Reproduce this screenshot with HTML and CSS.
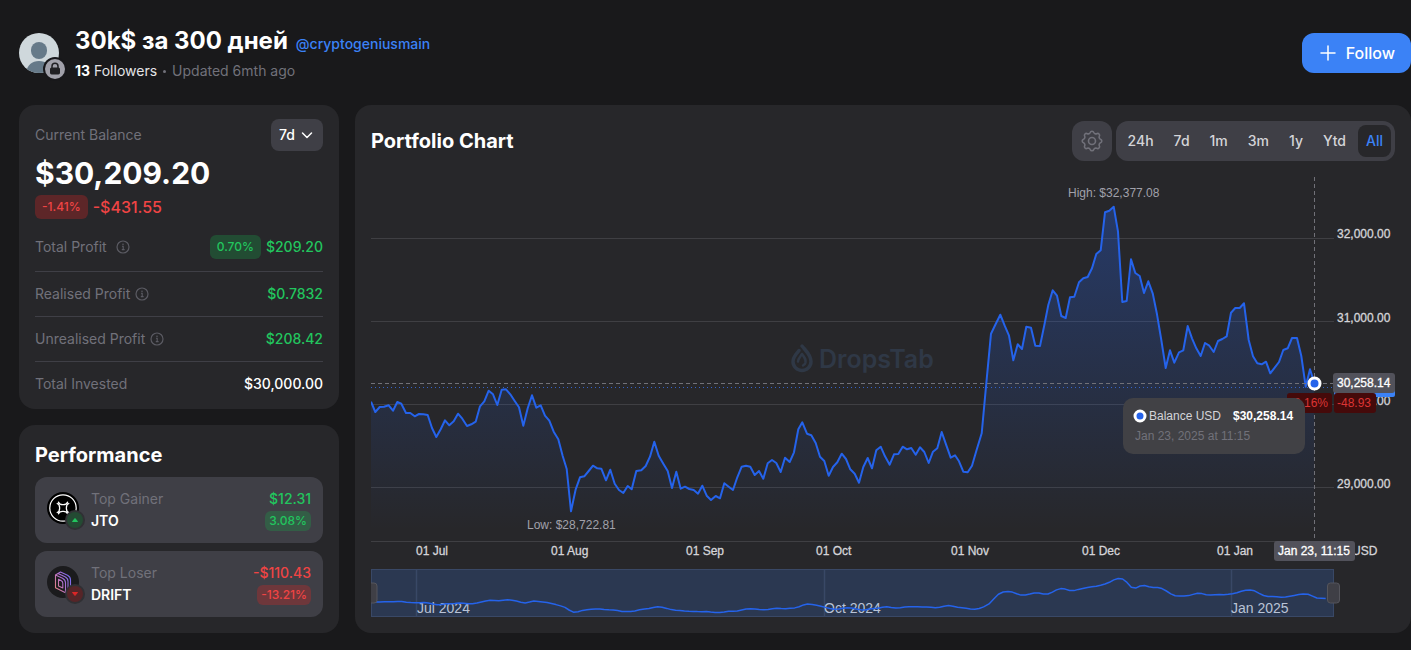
FILE: index.html
```html
<!DOCTYPE html>
<html lang="en">
<head>
<meta charset="utf-8">
<meta name="viewport" content="width=device-width, initial-scale=1">
<title>30k$ за 300 дней</title>
<link rel="stylesheet" href="styles.css">
</head>
<body>
<svg class="defs" aria-hidden="true">
  <symbol id="info" viewBox="0 0 16 16">
    <circle cx="8" cy="8" r="6" fill="none" stroke="currentColor" stroke-width="1.2"/>
    <path d="M7 7.3h1.2v3.2M6.8 10.6h2.8" fill="none" stroke="currentColor" stroke-width="1.1"/>
    <circle cx="8" cy="5.3" r=".8" fill="currentColor"/>
  </symbol>
</svg>
<div class="page">
  <header class="header">
    <div class="avatar">
      <svg class="avatar-image" viewBox="0 0 40 40" aria-hidden="true">
        <clipPath id="round"><circle cx="20" cy="20" r="20"/></clipPath>
        <g clip-path="url(#round)">
          <rect width="40" height="40" fill="#cfd8dc"/>
          <rect x="12" y="9" width="16" height="17" rx="8" fill="#667a89"/>
          <path d="M7 40c1-8 6-12 13-12s12 4 13 12z" fill="#667a89"/>
        </g>
      </svg>
      <svg class="avatar-lock" viewBox="0 0 24 24" aria-hidden="true">
        <circle cx="12" cy="12" r="12" fill="#18181b"/>
        <circle cx="12" cy="12" r="10" fill="#a1a1aa"/>
        <rect x="7" y="10.4" width="10" height="7" rx="1.6" fill="#202023"/>
        <path d="M9 11V9.2a3 3 0 0 1 6 0V11" fill="none" stroke="#202023" stroke-width="1.5"/>
      </svg>
    </div>
    <div class="identity">
      <div class="identity-line">
        <h1>30k$ за 300 дней</h1>
        <a class="handle" href="#">@cryptogeniusmain</a>
      </div>
      <p class="meta"><span class="followers"><b>13</b> Followers</span><span class="dot"></span>Updated 6mth ago</p>
    </div>
    <button class="follow" type="button">
      <svg viewBox="0 0 20 20" aria-hidden="true"><path d="M10 3v14M3 10h14" stroke="currentColor" stroke-width="1.5" stroke-linecap="round"/></svg>
      Follow
    </button>
  </header>

  <main class="columns">
    <div class="side">
      <section class="card balance">
        <div class="row top">
          <label for="period">Current Balance</label>
          <div class="select">
            <select id="period"><option>7d</option></select>
            <svg viewBox="0 0 12 12" aria-hidden="true"><path d="M1.500 4l4.500 4.500 4.500-4.500" fill="none" stroke="currentColor" stroke-width="1.5" stroke-linecap="round" stroke-linejoin="round"/></svg>
          </div>
        </div>
        <p class="amount">$30,209.20</p>
        <p class="change"><span class="badge red">-1.41%</span><span>-$431.55</span></p>
        <div class="row line profit">
          <span class="name wide">Total Profit <svg><use href="#info"/></svg></span>
          <span class="value up"><span class="badge green">0.70%</span>$209.20</span>
        </div>
        <div class="row line">
          <span class="name">Realised Profit <svg><use href="#info"/></svg></span>
          <span class="value up">$0.7832</span>
        </div>
        <div class="row line">
          <span class="name">Unrealised Profit <svg><use href="#info"/></svg></span>
          <span class="value up">$208.42</span>
        </div>
        <div class="row line">
          <span class="name">Total Invested</span>
          <span class="value">$30,000.00</span>
        </div>
      </section>

      <section class="card performance">
        <h2>Performance</h2>
        <div class="coin">
          <svg class="coin-icon" viewBox="0 0 40 40" aria-hidden="true">
            <circle cx="16" cy="16" r="16" fill="#000"/>
            <circle cx="16" cy="16" r="13.2" fill="none" stroke="#fff" stroke-width="1.2"/>
            <path d="M11.500 10.200c1 2.600 2.400 2.400 4.500 2.400s3.500.2 4.500-2.400M11.500 21.800c1-2.600 2.400-2.400 4.500-2.400s3.500-.2 4.500 2.400M10.200 11.500c2.600 1 2.400 2.400 2.400 4.500s.2 3.500-2.400 4.500M21.800 11.500c-2.600 1-2.400 2.400-2.400 4.500s-.2 3.500 2.400 4.500" fill="none" stroke="#fff" stroke-width="1.300" stroke-linecap="round"/>
            <circle cx="28" cy="28" r="10" fill="#303034"/>
            <circle cx="28" cy="28" r="8" fill="#244a33"/>
            <path d="M25.500 29.500l2.500-3 2.500 3z" fill="#22c55e" stroke="#22c55e" stroke-linejoin="round"/>
          </svg>
          <div class="coin-text"><span class="muted">Top Gainer</span><b>JTO</b></div>
          <div class="coin-value up"><span>$12.31</span><span class="badge small green">3.08%</span></div>
        </div>
        <div class="coin">
          <svg class="coin-icon" viewBox="0 0 40 40" aria-hidden="true">
            <linearGradient id="drift" gradientUnits="userSpaceOnUse" x1="8" y1="20" x2="25" y2="12"><stop offset="0" stop-color="#e0808a"/><stop offset=".45" stop-color="#b070d0"/><stop offset="1" stop-color="#6f6af2"/></linearGradient>
            <circle cx="16" cy="16" r="16" fill="#1b1b1d"/>
            <g fill="none" stroke="url(#drift)" stroke-width="1.100" stroke-linejoin="round">
              <path d="M8.500 9l7 3.200q3 1.400 3 4.500v10l-10-5z"/>
              <path d="M8.500 9l2.500-1.500 7 3.200q3 1.400 3 4.500v9.500l-2.500 1.500"/>
              <path d="M11 7.500l2.500-1.500 7 3.200q3 1.400 3 4.500v9.500l-2.500 1.500"/>
              <path d="M11.500 13.200l2.500 1.200q1.800.9 1.800 2.800v4.800l-4.300-2.100z"/>
            </g>
            <circle cx="28" cy="28" r="10" fill="#303034"/>
            <circle cx="28" cy="28" r="8" fill="#562528"/>
            <path d="M25.500 26.500l2.500 3 2.500-3z" fill="#dc2626" stroke="#dc2626" stroke-linejoin="round"/>
          </svg>
          <div class="coin-text"><span class="muted">Top Loser</span><b>DRIFT</b></div>
          <div class="coin-value down"><span>-$110.43</span><span class="badge small red">-13.21%</span></div>
        </div>
      </section>
    </div>

    <section class="card chart">
      <div class="row chart-head">
        <h2>Portfolio Chart</h2>
        <div class="tools">
          <button class="gear" type="button" aria-label="Chart settings">
            <svg viewBox="0 0 24 24" aria-hidden="true">
              <path fill="none" stroke="currentColor" stroke-width="1.600" stroke-linejoin="round" d="M10.200 3.500A1.900 1.900 0 0 1 13.800 3.500A2.200 2.200 0 0 0 16.700 4.700A1.900 1.900 0 0 1 19.300 7.300A2.200 2.200 0 0 0 20.500 10.200A1.900 1.900 0 0 1 20.500 13.800A2.200 2.200 0 0 0 19.300 16.700A1.900 1.900 0 0 1 16.700 19.300A2.200 2.200 0 0 0 13.800 20.500A1.900 1.900 0 0 1 10.200 20.500A2.200 2.200 0 0 0 7.300 19.300A1.900 1.900 0 0 1 4.700 16.700A2.200 2.200 0 0 0 3.500 13.800A1.900 1.900 0 0 1 3.500 10.200A2.200 2.200 0 0 0 4.700 7.300A1.900 1.900 0 0 1 7.300 4.700A2.200 2.200 0 0 0 10.200 3.500z"/>
              <circle cx="12" cy="12" r="3.500" fill="none" stroke="currentColor" stroke-width="1.600"/>
            </svg>
          </button>
          <div class="ranges">
            <button type="button">24h</button><button type="button">7d</button><button type="button">1m</button><button type="button">3m</button><button type="button">1y</button><button type="button">Ytd</button><button type="button" class="active">All</button>
          </div>
        </div>
      </div>
      <svg class="plot" viewBox="371 177 1024 440" role="img" aria-label="Portfolio Chart">
        <defs>
          <linearGradient id="fill" gradientUnits="userSpaceOnUse" x1="0" y1="207" x2="0" y2="530">
            <stop offset="0" stop-color="#2563eb" stop-opacity=".32"/><stop offset="1" stop-color="#2563eb" stop-opacity="0"/>
          </linearGradient>
          <clipPath id="nav-clip"><rect x="371" y="569" width="962" height="48"/></clipPath>
        </defs>
        <g class="watermark">
          <path d="M802 346c4 5 9 9 9 15.500a9 9 0 0 1-18 0c0-5 4-8 6-11" fill="none" stroke-width="3.500" stroke-linecap="round"/>
          <path d="M802 354c-2 3-4 5-4 7.500M802 354c3 4 4 5.500 3.500 8.500-.4 2-1.500 2.500-2.500 3" fill="none" stroke-width="2.500" stroke-linecap="round"/>
          <text x="819" y="368">DropsTab</text>
        </g>
        <path class="grid" d="M371 238.500H1334M371 321.500H1334M371 404.500H1334M371 487.500H1334M371 541.500H1334"/>
        <path id="area" fill="url(#fill)"/>
        <path id="line" class="series"/>
        <path class="last" d="M371 387.500H1334"/>
        <path class="cross" d="M371 383.500H1334M1314.500 177V540"/>
        <text class="extreme" x="1068" y="197">High: $32,377.08</text>
        <text class="extreme" x="527" y="529">Low: $28,722.81</text>
        <g class="axis">
          <text x="1337" y="238">32,000.00</text><text x="1337" y="322">31,000.00</text>
          <text x="1337" y="405">30,000.00</text><text x="1337" y="488">29,000.00</text>
          <text x="416" y="555">01 Jul</text><text x="551" y="555">01 Aug</text><text x="686" y="555">01 Sep</text>
          <text x="816" y="555">01 Oct</text><text x="951" y="555">01 Nov</text><text x="1082" y="555">01 Dec</text>
          <text x="1217" y="555">01 Jan</text><text x="1352" y="555">USD</text>
        </g>
        <rect x="1334" y="377" width="61" height="20" rx="2" fill="#3b82f6"/>
        <rect x="1333" y="373" width="62" height="20" rx="3" fill="#52525b"/>
        <text class="tag" x="1337" y="387">30,258.14</text>
        <rect x="1287" y="393" width="45" height="20" rx="3" fill="#450a0a"/>
        <rect x="1334" y="393" width="42" height="20" rx="3" fill="#450a0a"/>
        <text class="loss" x="1290" y="407">-0.16%</text><text class="loss" x="1337" y="407">-48.93</text>
        <rect x="1274" y="541" width="81" height="20" rx="3" fill="#52525b"/>
        <text class="tag" x="1278" y="555">Jan 23, 11:15</text>

        <rect class="tip" x="1123" y="398" width="182" height="56" rx="10"/>
        <circle class="marker" cx="1140" cy="416" r="5"/>
        <text class="tip-name" x="1149" y="420">Balance USD</text>
        <text class="tip-value" x="1233" y="420">$30,258.14</text>
        <text class="tip-date" x="1135" y="440">Jan 23, 2025 at 11:15</text>
        <circle class="marker" cx="1314.500" cy="383.500" r="5.500"/>

        <rect x="371.500" y="569.500" width="962" height="47" fill="#2b3851" stroke="#394866"/>
        <path d="M416.500 570V616M824.500 570V616M1231.500 570V616" stroke="#394866" stroke-width="1.500"/>
        <g class="nav-text"><text x="417" y="613">Jul 2024</text><text x="824" y="613">Oct 2024</text><text x="1231" y="613">Jan 2025</text></g>
        <path id="nav-line" class="series thin"/>
        <rect class="handle-bar" x="365" y="583" width="12" height="20" rx="3" clip-path="url(#nav-clip)"/>
        <rect class="handle-bar" x="1327.500" y="583" width="12" height="20" rx="3"/>
      </svg>
    </section>
  </main>
</div>
<script src="chart.js"></script>
</body>
</html>
```
FILE: styles.css
```css
* { box-sizing: border-box; }
body { margin: 0; background: #19191b; color: #fff; font: 400 14px/20px Inter, "Noto Sans", sans-serif; }
h1, h2, p { margin: 0; }
button, select { font: inherit; color: inherit; border: 0; cursor: pointer; }
.defs { display: none; }
.page { padding: 25px 0 17px 19px; }

.header { display: flex; align-items: center; height: 56px; }
.avatar { position: relative; width: 40px; height: 40px; margin-right: 16px; }
.avatar-image { display: block; width: 40px; height: 40px; }
.avatar-lock { position: absolute; left: 24px; top: 24px; width: 24px; height: 24px; }
.identity { flex: 1; }
.identity-line { display: flex; align-items: baseline; gap: 8px; }
h1 { font-size: 24px; line-height: 32px; font-weight: 700; }
.handle { color: #3b82f6; font-weight: 500; text-decoration: none; }
.meta { display: flex; align-items: center; margin-top: 4px; color: #71717a; }
.followers { color: #e4e4e7; }
.followers b { color: #fff; font-weight: 700; }
.dot { width: 3px; height: 3px; margin: 0 6px; border-radius: 50%; background: #71717a; }
.follow { display: flex; align-items: center; gap: 8px; height: 40px; padding: 0 16px; border-radius: 12px; background: #3b82f6; font-size: 16px; font-weight: 500; }
.follow svg { width: 20px; height: 20px; }

.columns { display: grid; grid-template-columns: 320px minmax(0, 1fr); gap: 16px; align-items: start; margin-top: 24px; }
.side { display: grid; gap: 16px; }
.card { border-radius: 16px; background: #27272a; padding: 16px; }
.row { display: flex; align-items: center; justify-content: space-between; }
h2 { font-size: 20px; line-height: 28px; font-weight: 700; }
.muted, .name, .top label { color: #71717a; }

.balance { padding: 14px 16px 3px; }
.select { position: relative; }
.select select { display: block; appearance: none; width: 52px; height: 32px; padding: 0 8px; border-radius: 8px; background: #3f3f46; font-weight: 500; }
.select svg { position: absolute; right: 10px; top: 10px; width: 12px; height: 12px; pointer-events: none; }
.amount { margin-top: 2px; font-size: 30px; line-height: 40px; font-weight: 700; }
.change { display: flex; align-items: center; gap: 5px; margin-top: 2px; color: #ef4444; font-size: 16px; line-height: 24px; font-weight: 500; }
.badge { padding: 0 7px; border-radius: 6px; font-size: 12px; line-height: 24px; font-weight: 500; }
.badge.small { padding: 0 4px; line-height: 20px; }
.red { background: rgba(220, 38, 38, .3); color: #ef4444; }
.green { background: rgba(22, 163, 74, .3); color: #22c55e; }
.line { padding: 12px 0; border-bottom: 1px solid #3f3f46; }
.line:last-child { border: 0; }
.profit { margin-top: 4px; }
.name { display: flex; align-items: center; gap: 4px; }
.name.wide { gap: 8px; }
.name svg { width: 16px; height: 16px; color: #5b5b63; }
.value { display: flex; align-items: center; gap: 5px; font-weight: 500; }
.up { color: #22c55e; }
.down { color: #ef4444; }

.performance { display: grid; gap: 8px; }
.coin { display: flex; align-items: center; height: 66px; padding: 12px; border-radius: 12px; background: #3f3f46; }
.coin-icon { width: 40px; height: 40px; margin: 4px 4px 0 0; }
.coin-text { display: grid; gap: 2px; flex: 1; }
.coin-text b { font-weight: 600; }
.coin-value { display: grid; gap: 2px; justify-items: end; font-weight: 500; }

.tools { display: flex; gap: 4px; }
.gear { display: grid; place-items: center; width: 40px; height: 40px; padding: 0; border-radius: 12px; background: #3f3f46; color: #71717a; }
.gear svg { width: 24px; height: 24px; }
.ranges { display: flex; gap: 4px; padding: 4px; border-radius: 12px; background: #3f3f46; }
.ranges button { height: 32px; padding: 0 8px; border-radius: 8px; background: none; color: #d4d4d8; font-weight: 500; }
.ranges .active { background: #27272a; color: #3b82f6; }

.plot { display: block; width: 100%; height: auto; margin-top: 16px; font: 12px "Liberation Sans", Arial, sans-serif; }
.watermark { fill: #2f3846; stroke: #2f3846; }
.watermark text { stroke: none; font: 600 25px Inter, sans-serif; }
.grid { fill: none; stroke: #3f3f43; }
.series { fill: none; stroke: #2563eb; stroke-width: 2; stroke-linejoin: round; }
.series.thin { stroke-width: 1.5; }
.cross { fill: none; stroke: #717178; stroke-dasharray: 4 3; }
.last { fill: none; stroke: #3563c4; stroke-dasharray: 1 3; }
.extreme { fill: #a1a1aa; }
.axis { fill: #d4d4d8; stroke: #d4d4d8; stroke-width: .3; }
.tag { fill: #fff; stroke: #fff; stroke-width: .3; }
.loss { fill: #dc3535; }
.tip { fill: #414145; }
.tip-name { fill: #d4d4d8; }
.tip-value { fill: #fff; font-weight: 700; }
.tip-date { fill: #71717a; }
.marker { fill: #2563eb; stroke: #fff; stroke-width: 3; }
.nav-text { fill: #b9c3d6; font-size: 14px; }
.handle-bar { fill: #3f3f46; stroke: #55555c; }
```
FILE: chart.js
```js
// Each run holds its origin and points measured in thirds of a chart unit.
const runs = [
  { x: 360, y: 370, p: "33,95 46,126 59,111 72,110 86,106 99,122 112,96 124,101 138,129 151,129 164,139 177,132 190,133 203,135 216,174 229,201 242,178 255,151 268,166 281,154 294,131 307,146 321,168 334,163 347,155 360,109 373,94 386,62 399,73 412,105 425,59 438,58 451,73 464,93 477,112 490,167 503,115 516,76 529,113 542,106 555,137 568,152 581,185 595,208 608,258 620,297 633,424 647,358 660,322 673,319 686,303 699,287 712,295" },
  { x: 600, y: 370, p: "4,296 18,331 31,299 44,341 57,360 70,369 83,348 95,358 109,303 124,301 137,288 150,260 163,215 176,257 190,281 203,303 216,354 229,305 242,356 255,350 268,357 281,360 294,371 307,347 320,377 333,390 347,378 360,385 373,340 386,350 399,360 412,322 425,290 438,287 451,290 464,315 477,303 490,326 503,280 516,270 529,279 542,306 555,263 569,276 582,247 595,178 607,157 621,191 634,196 647,219 660,260 673,273 686,317 699,291 712,277 725,251 738,267 751,298 764,311 777,338" },
  { x: 840, y: 180, p: "70,861 83,834 96,865 109,811 122,800 135,829 149,854 162,823 175,822 188,800 201,808 214,804 227,824 240,802 253,816 266,849 279,815 292,805 305,756 318,793 332,833 345,826 357,844 370,875 383,877 396,857 409,813 425,760 439,610 453,461 467,432 481,404 494,437 507,467 520,541 533,493 546,507 559,440 573,443 586,497 600,498 613,436 625,375 638,331 651,347 664,408 677,414 690,352 703,350 717,307 730,295 743,291 756,265 769,222 782,211 795,97 808,92 821,80 834,155 847,366 860,363" },
  { x: 1100, y: 200, p: "93,178 106,219 119,228 132,279 145,244 158,280 171,343 184,420 197,504 210,451 223,488 237,457 250,451 263,378 276,415 289,445 302,468 315,429 328,437 341,456 354,423 367,417 380,409 393,338 406,324 419,324 432,310 446,420 459,469 472,490 485,493 498,485 511,520 524,503 537,486 550,450 563,445 576,414 591,414 604,468 617,560 630,508 643,549" }
];
const points = runs.flatMap(r => r.p.split(" ").map(s => {
  const [x, y] = s.split(",").map(Number);
  return [r.x + x / 3, r.y + y / 3];
}));
const toPath = list => "M" + list.map(p => p[0].toFixed(1) + " " + p[1].toFixed(1)).join("L");
const line = toPath(points);
document.getElementById("line").setAttribute("d", line);
document.getElementById("area").setAttribute("d", line + "L1314 540L371 540Z");

// The navigator shows the same series, smoothed over its neighbours.
const overview = points.map((p, i) => {
  const a = points[Math.max(i - 1, 0)][1];
  const b = points[Math.min(i + 1, points.length - 1)][1];
  const y = (a + 2 * p[1] + b) / 4;
  return [371 + (p[0] - 371) * 1.012, 579 + (y - 214) * 0.118];
});
document.getElementById("nav-line").setAttribute("d", toPath(overview));
```
